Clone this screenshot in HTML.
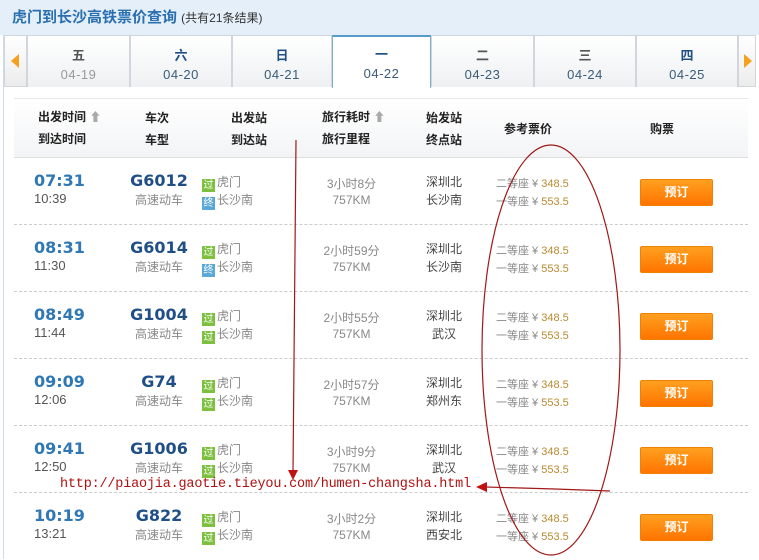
<!DOCTYPE html>
<html><head><meta charset="utf-8"><style>
*{margin:0;padding:0;box-sizing:border-box}
body{width:759px;height:559px;overflow:hidden;background:#fff;font-family:"Liberation Sans","Noto Sans CJK SC",sans-serif;position:relative}
.top{position:absolute;left:0;top:0;width:759px;height:35px;background:#e4eff9}
.title{position:absolute;left:12px;top:6px;font-size:15px;font-weight:bold;color:#2a6fb0}
.title span{font-size:12px;font-weight:normal;color:#333}
.frame{position:absolute;left:3px;top:35px;width:756px;height:524px;border-left:1px solid #c8dcec}
.tabs{position:absolute;left:4px;top:35px;width:751px;height:52px;border-bottom:1px solid #c9d6e2}
.tab{position:absolute;top:0;height:52px;background:linear-gradient(#fff,#eef0f2);border:1px solid #d0d6dc;border-bottom:none;text-align:center}
.tab b{display:block;font-size:13px;color:#555;margin-top:9px}
.tab i{display:block;font-style:normal;font-size:13px;color:#3a5c7a;margin-top:3px;letter-spacing:.5px}
.sel{background:#fff;border-top:2px solid #5a9ac8;border-left:1px solid #7ab0d8;border-right:1px solid #7ab0d8;height:53px}
.arr{position:absolute;top:0;height:52px;background:linear-gradient(#fff,#ececec);border:1px solid #d0d6dc}
.hdr{position:absolute;left:14px;top:98px;width:734px;height:60px;background:linear-gradient(#fff,#f3f4f6);border-top:1px solid #e8e8e8;border-bottom:1px solid #ddd;font-size:12px;font-weight:bold;color:#222}
.hdr div{position:absolute;line-height:22px}
.row{position:absolute;left:14px;width:734px;height:67px;border-bottom:1px dashed #ccc}
.row div{position:absolute}
.t1{left:20px;top:13px;font-family:"DejaVu Sans",sans-serif;font-size:16px;font-weight:bold;color:#2f78b4}
.t2{left:20px;top:33px;font-size:13px;color:#555}
.c1{left:100px;width:90px;text-align:center;top:13px;font-family:"DejaVu Sans",sans-serif;font-size:16px;font-weight:bold;color:#1f4f86}
.c2{left:105px;width:80px;text-align:center;top:33px;font-size:12px;color:#888}
.s{left:188px;font-size:12px;color:#888}
.ic{display:inline-block;width:13px;height:13px;background:#7dc040;color:#fff;font-size:10px;line-height:13px;text-align:center;vertical-align:-2px;margin-right:2px}
.ic.b{background:#5aa8d8}
.d{left:295px;width:85px;text-align:center;font-size:12px;color:#888}
.o{left:405px;width:50px;text-align:center;font-size:12px;color:#444}
.p{left:482px;font-size:11px;color:#888}
.p em{font-style:normal;color:#b88a30}
.btn{left:626px;top:21px;width:73px;height:27px;background:linear-gradient(#ffa020,#ff7400);border:1px solid #f08000;border-radius:2px;color:#fff;font-weight:bold;font-size:12px;text-align:center;line-height:25px}
.url{position:absolute;left:60px;top:477px;font-family:"Liberation Mono",monospace;font-size:13.5px;color:#b01010;letter-spacing:-.2px}
</style></head><body>
<div class="top"></div>
<div class="title">虎门到长沙高铁票价查询 <span>(共有21条结果)</span></div>
<div class="frame"></div>
<div class="tabs">
<div class="arr" style="left:0;width:23px"><svg width="21" height="50"><polygon points="14,18 14,32 6,25" fill="#f5a020"/></svg></div>
<div class="tab" style="left:23px;width:103px"><b>五</b><i style="color:#999">04-19</i></div>
<div class="tab" style="left:126px;width:102px"><b style="color:#1f4f86">六</b><i>04-20</i></div>
<div class="tab" style="left:228px;width:100px"><b style="color:#1f4f86">日</b><i>04-21</i></div>
<div class="tab sel" style="left:328px;width:99px"><b style="color:#1f4f86;margin-top:7px">一</b><i>04-22</i></div>
<div class="tab" style="left:427px;width:103px"><b style="color:#555">二</b><i>04-23</i></div>
<div class="tab" style="left:530px;width:102px"><b style="color:#555">三</b><i>04-24</i></div>
<div class="tab" style="left:632px;width:102px"><b style="color:#1f4f86">四</b><i>04-25</i></div>
<div class="arr" style="left:734px;width:18px"><svg width="16" height="50"><polygon points="5,18 5,32 13,25" fill="#f5a020"/></svg></div>
</div>
<div class="hdr">
<div style="left:24px;top:7px">出发时间 <span style="color:#aaa">⬆</span><br>到达时间</div>
<div style="left:131px;top:8px">车次<br>车型</div>
<div style="left:217px;top:8px">出发站<br>到达站</div>
<div style="left:308px;top:7px">旅行耗时 <span style="color:#aaa">⬆</span><br>旅行里程</div>
<div style="left:412px;top:8px">始发站<br>终点站</div>
<div style="left:490px;top:19px">参考票价</div>
<div style="left:636px;top:19px">购票</div>
</div>

<div class="row" style="top:158px"><div class="t1">07:31</div><div class="t2">10:39</div><div class="c1">G6012</div><div class="c2">高速动车</div><div class="s" style="top:15px"><span class="ic">过</span>虎门</div><div class="s" style="top:33px"><span class="ic b">终</span>长沙南</div><div class="d" style="top:17px">3小时8分</div><div class="d" style="top:35px">757KM</div><div class="o" style="top:15px">深圳北</div><div class="o" style="top:33px">长沙南</div><div class="p" style="top:17px">二等座 ¥ <em>348.5</em></div><div class="p" style="top:35px">一等座 ¥ <em>553.5</em></div><div class="btn">预订</div></div>
<div class="row" style="top:225px"><div class="t1">08:31</div><div class="t2">11:30</div><div class="c1">G6014</div><div class="c2">高速动车</div><div class="s" style="top:15px"><span class="ic">过</span>虎门</div><div class="s" style="top:33px"><span class="ic b">终</span>长沙南</div><div class="d" style="top:17px">2小时59分</div><div class="d" style="top:35px">757KM</div><div class="o" style="top:15px">深圳北</div><div class="o" style="top:33px">长沙南</div><div class="p" style="top:17px">二等座 ¥ <em>348.5</em></div><div class="p" style="top:35px">一等座 ¥ <em>553.5</em></div><div class="btn">预订</div></div>
<div class="row" style="top:292px"><div class="t1">08:49</div><div class="t2">11:44</div><div class="c1">G1004</div><div class="c2">高速动车</div><div class="s" style="top:15px"><span class="ic">过</span>虎门</div><div class="s" style="top:33px"><span class="ic">过</span>长沙南</div><div class="d" style="top:17px">2小时55分</div><div class="d" style="top:35px">757KM</div><div class="o" style="top:15px">深圳北</div><div class="o" style="top:33px">武汉</div><div class="p" style="top:17px">二等座 ¥ <em>348.5</em></div><div class="p" style="top:35px">一等座 ¥ <em>553.5</em></div><div class="btn">预订</div></div>
<div class="row" style="top:359px"><div class="t1">09:09</div><div class="t2">12:06</div><div class="c1">G74</div><div class="c2">高速动车</div><div class="s" style="top:15px"><span class="ic">过</span>虎门</div><div class="s" style="top:33px"><span class="ic">过</span>长沙南</div><div class="d" style="top:17px">2小时57分</div><div class="d" style="top:35px">757KM</div><div class="o" style="top:15px">深圳北</div><div class="o" style="top:33px">郑州东</div><div class="p" style="top:17px">二等座 ¥ <em>348.5</em></div><div class="p" style="top:35px">一等座 ¥ <em>553.5</em></div><div class="btn">预订</div></div>
<div class="row" style="top:426px"><div class="t1">09:41</div><div class="t2">12:50</div><div class="c1">G1006</div><div class="c2">高速动车</div><div class="s" style="top:15px"><span class="ic">过</span>虎门</div><div class="s" style="top:33px"><span class="ic">过</span>长沙南</div><div class="d" style="top:17px">3小时9分</div><div class="d" style="top:35px">757KM</div><div class="o" style="top:15px">深圳北</div><div class="o" style="top:33px">武汉</div><div class="p" style="top:17px">二等座 ¥ <em>348.5</em></div><div class="p" style="top:35px">一等座 ¥ <em>553.5</em></div><div class="btn">预订</div></div>
<div class="row" style="top:493px;border:none"><div class="t1">10:19</div><div class="t2">13:21</div><div class="c1">G822</div><div class="c2">高速动车</div><div class="s" style="top:15px"><span class="ic">过</span>虎门</div><div class="s" style="top:33px"><span class="ic">过</span>长沙南</div><div class="d" style="top:17px">3小时2分</div><div class="d" style="top:35px">757KM</div><div class="o" style="top:15px">深圳北</div><div class="o" style="top:33px">西安北</div><div class="p" style="top:17px">二等座 ¥ <em>348.5</em></div><div class="p" style="top:35px">一等座 ¥ <em>553.5</em></div><div class="btn">预订</div></div>

<div class="url">http://piaojia.gaotie.tieyou.com/humen-changsha.html</div>
<svg style="position:absolute;left:0;top:0" width="759" height="559">
<g stroke="#a01818" fill="none" stroke-width="1.2">
<line x1="296" y1="140" x2="293" y2="472"/>
<ellipse cx="551" cy="350" rx="69" ry="205"/>
<path d="M610 491 L555 489 L486 487"/>
</g>
<polygon points="288,470 298,470 293,480" fill="#c01010"/>
<polygon points="476,487 487,482 487,492" fill="#c01010"/>
</svg>
</body></html>
